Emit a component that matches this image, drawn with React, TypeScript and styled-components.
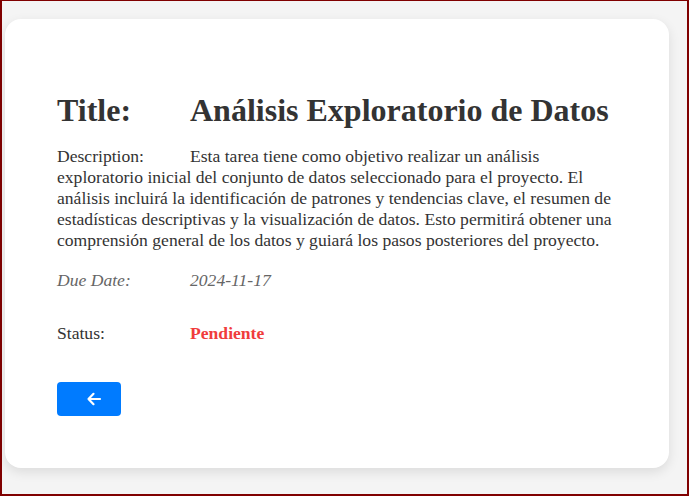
import React from "react";
import styled, { createGlobalStyle } from "styled-components";

const Global = createGlobalStyle`
  html, body { margin: 0; padding: 0; }
  body {
    background: #f4f4f4;
    font-family: "Liberation Serif", "Times New Roman", serif;
    color: #333;
  }
  #root { min-height: 100vh; }
`;

const Frame = styled.div`
  box-sizing: border-box;
  height: 496px;
  border: 2px solid #800000;
  border-top-width: 1px;
  padding: 18px 18px 0 3px;
  background: #f4f4f4;
`;

const Card = styled.div`
  box-sizing: border-box;
  width: 664px;
  height: 449px;
  background: #fff;
  border-radius: 16px;
  box-shadow: 0 4px 12px rgba(0, 0, 0, 0.1);
  padding: 52px 52px;
  display: flex;
  flex-direction: column;
  align-items: flex-start;
`;

const Title = styled.h1`
  margin: 21px 0 0;
  font-size: 32px;
  font-weight: bold;
  line-height: 36px;
  color: #333;
`;

const Label = styled.span`
  display: inline-block;
  width: 133px;
`;

const Description = styled.p`
  margin: 18px 0 0;
  font-size: 17.6px;
  line-height: 21px;
  color: #333;
`;

const Row = styled.p<{ $italic?: boolean; $muted?: boolean }>`
  margin: 0;
  font-size: 17.6px;
  line-height: 21px;
  font-style: ${(p) => (p.$italic ? "italic" : "normal")};
  color: ${(p) => (p.$muted ? "#666" : "#333")};
`;

const DueRow = styled(Row)`
  margin-top: 19px;
`;

const StatusRow = styled(Row)`
  margin-top: 32px;
`;

const Status = styled.span`
  color: #f03c3c;
  font-weight: bold;
`;

const BackButton = styled.button`
  margin-top: 38px;
  width: 64px;
  height: 36px;
  border: none;
  border-radius: 4px;
  background: #007bff;
  color: #fff;
  display: flex;
  align-items: center;
  justify-content: center;
  cursor: pointer;
  padding: 0 0 0 10px;
`;

export default function App() {
  return (
    <>
      <Global />
      <Frame>
        <Card>
          <Title>
            <Label>Title:</Label>Análisis Exploratorio de Datos
          </Title>
          <Description>
            <Label>Description:</Label>Esta tarea tiene como objetivo realizar un análisis
            exploratorio inicial del conjunto de datos seleccionado para el proyecto. El
            análisis incluirá la identificación de patrones y tendencias clave, el resumen de
            estadísticas descriptivas y la visualización de datos. Esto permitirá obtener una
            comprensión general de los datos y guiará los pasos posteriores del proyecto.
          </Description>
          <DueRow $italic $muted>
            <Label>Due Date:</Label>2024-11-17
          </DueRow>
          <StatusRow>
            <Label>Status:</Label>
            <Status>Pendiente</Status>
          </StatusRow>
          <BackButton aria-label="Back">
            <svg width="16" height="16" viewBox="0 0 16 16" fill="none" stroke="#fff" strokeWidth="2.2" strokeLinecap="round" strokeLinejoin="round">
              <path d="M14 8H2.5M7.5 2.8L2.5 8L7.5 13.2" />
            </svg>
          </BackButton>
        </Card>
      </Frame>
    </>
  );
}
